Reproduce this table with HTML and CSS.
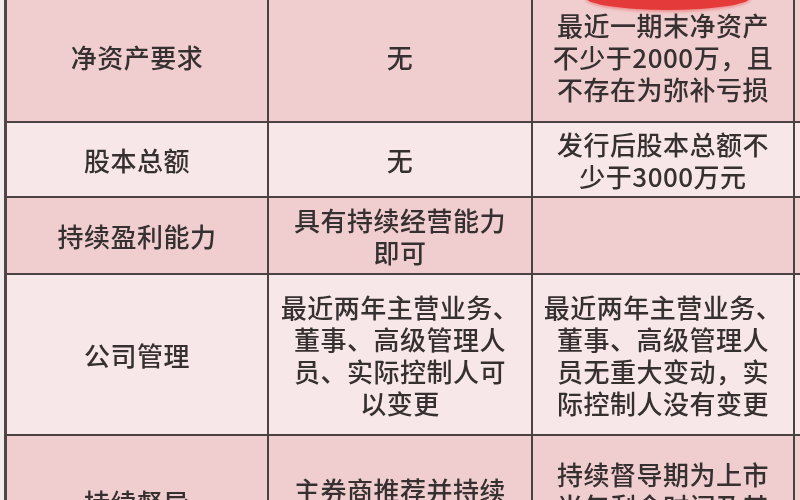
FILE: index.html
```html
<!DOCTYPE html>
<html lang="zh-CN">
<head>
<meta charset="utf-8">
<title>对比表</title>
<link rel="stylesheet" href="styles.css">
</head>
<body>
<div class="page">
  <div class="grid">
    <div class="cell pink">净资产要求</div>
    <div class="cell pink">无</div>
    <div class="cell pink">最近一期末净资产<br>不少于2000万，且<br>不存在为弥补亏损</div>
    <div class="cell pink edge"></div>

    <div class="cell light">股本总额</div>
    <div class="cell light">无</div>
    <div class="cell light">发行后股本总额不<br>少于3000万元</div>
    <div class="cell light edge"></div>

    <div class="cell pink">持续盈利能力</div>
    <div class="cell pink">具有持续经营能力<br>即可</div>
    <div class="cell pink"></div>
    <div class="cell pink edge"></div>

    <div class="cell light">公司管理</div>
    <div class="cell light">最近两年主营业务、<br>董事、高级管理人<br>员、实际控制人可<br>以变更</div>
    <div class="cell light">最近两年主营业务、<br>董事、高级管理人<br>员无重大变动，实<br>际控制人没有变更</div>
    <div class="cell light edge"></div>

    <div class="cell pink top t1">持续督导</div>
    <div class="cell pink top t2">主券商推荐并持续<br>督导<br>安排</div>
    <div class="cell pink top t3">持续督导期为上市<br>当年剩余时间及其<br>后两个完整会计<br>年度</div>
    <div class="cell pink edge"></div>
  </div>
  <div class="stamp"></div>
</div>
</body>
</html>
```

FILE: styles.css
```css
html, body {
  margin: 0;
  padding: 0;
  background: #f2eced;
  overflow: hidden;
}

.page {
  position: relative;
  width: 800px;
  height: 500px;
  overflow: hidden;
}

.grid {
  display: grid;
  grid-template-columns: 260px 262px 260px 40px;
  grid-template-rows: 129px 73px 75px 159px 160px;
  gap: 2px;
  margin-top: -8px;
  margin-left: 4px;
  border-left: 3px solid #4f4648;
  background: #4a4143;
  width: max-content;
  filter: blur(0.4px);
}

.cell {
  display: flex;
  align-items: center;
  justify-content: center;
  text-align: center;
  font-family: "Noto Sans CJK SC", "Noto Sans", sans-serif;
  font-size: 26px;
  font-weight: 500;
  line-height: 32px;
  letter-spacing: 0.5px;
  color: #363031;
}

.pink {
  background: #f0cecf;
}

.light {
  background: #f7e7e8;
}

.top {
  align-items: flex-start;
}

.t1 { padding-top: 50px; }
.t2 { padding-top: 38px; }
.t3 { padding-top: 22px; }

.stamp {
  position: absolute;
  left: 586px;
  top: -15px;
  width: 164px;
  height: 25px;
  border-radius: 50%;
  background: #e53a3a;
  box-shadow: 0 1px 3px 1px rgba(236, 120, 120, 0.7);
}
```
